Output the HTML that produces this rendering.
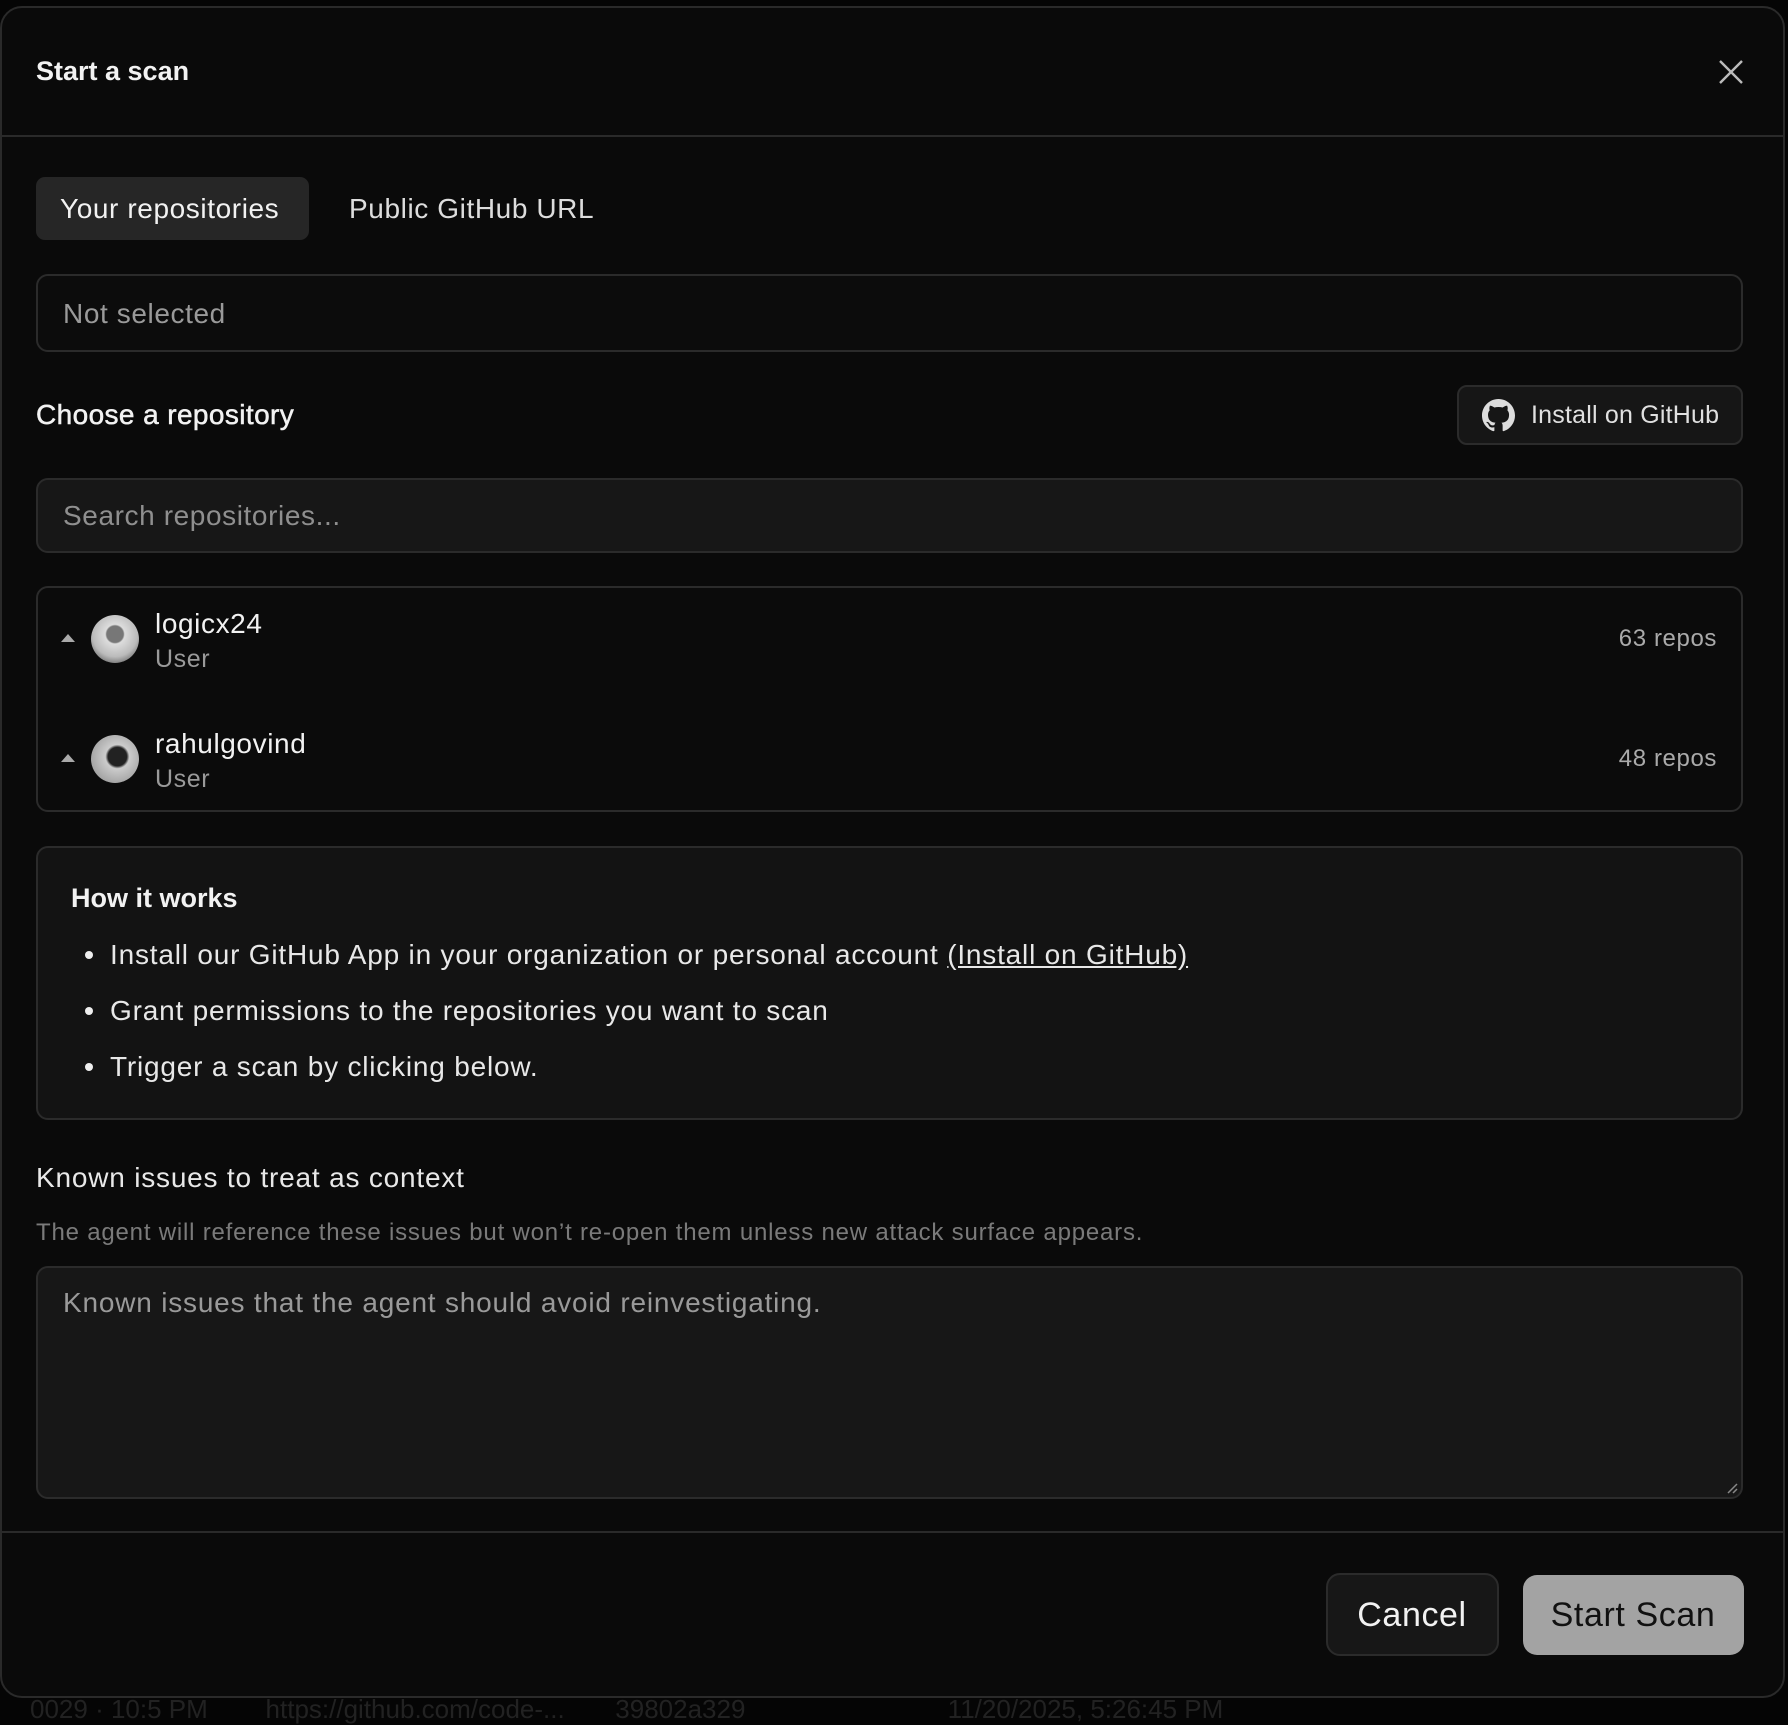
<!DOCTYPE html>
<html><head><style>
*{box-sizing:border-box;margin:0;padding:0}
body{width:1788px;height:1704px;background:#050505;font-family:"Liberation Sans",sans-serif;position:relative;overflow:hidden;color:#f2f2f2}
.abs{position:absolute}
.modal{left:0;top:6px;width:1785px;height:1692px;background:#0a0a0a;border:2px solid #2a2a2a;border-radius:22px}
.t{position:absolute;white-space:nowrap;line-height:1;letter-spacing:0.6px}
.box{position:absolute;border:2px solid #2b2b2b;border-radius:12px}
</style></head><body>
<div class="abs" style="left:30px;top:1694px;color:#222;font-size:26px;white-space:nowrap">0029 · 10:5 PM &nbsp;&nbsp;&nbsp;&nbsp;&nbsp;&nbsp; https://github.com/code-... &nbsp;&nbsp;&nbsp;&nbsp;&nbsp; 39802a329 &nbsp;&nbsp;&nbsp;&nbsp;&nbsp;&nbsp;&nbsp;&nbsp;&nbsp;&nbsp;&nbsp;&nbsp;&nbsp;&nbsp;&nbsp;&nbsp;&nbsp;&nbsp;&nbsp;&nbsp;&nbsp;&nbsp;&nbsp;&nbsp;&nbsp;&nbsp; 11/20/2025, 5:26:45 PM</div>
<div class="abs modal"></div>
<div class="t" style="left:36px;top:58px;font-size:27px;font-weight:bold;letter-spacing:0">Start a scan</div>
<svg class="abs" style="left:1718px;top:59px" width="26" height="26" viewBox="0 0 26 26"><path d="M2 2L24 24M24 2L2 24" stroke="#bbb" stroke-width="2.4"/></svg>
<div class="abs" style="left:0;top:135px;width:1785px;height:2px;background:#2a2a2a"></div>

<div class="abs" style="left:36px;top:177px;width:273px;height:63px;background:#262626;border-radius:9px"></div>
<div class="t" style="left:60px;top:195px;font-size:28px">Your repositories</div>
<div class="t" style="left:349px;top:195px;font-size:28px;color:#ddd">Public GitHub URL</div>

<div class="box" style="left:36px;top:274px;width:1707px;height:78px;background:#0c0c0c"></div>
<div class="t" style="left:63px;top:300px;font-size:28px;color:#9a9a9a">Not selected</div>

<div class="t" style="left:36px;top:401px;font-size:28px;letter-spacing:0.4px;-webkit-text-stroke:0.5px #f2f2f2">Choose a repository</div>
<div class="box" style="left:1457px;top:385px;width:286px;height:60px;background:#161616;border-radius:10px"></div>
<svg class="abs" style="left:1482px;top:399px" width="33" height="33" viewBox="0 0 16 16"><path fill="#ddd" d="M8 0C3.58 0 0 3.58 0 8c0 3.54 2.29 6.53 5.47 7.59.4.07.55-.17.55-.38 0-.19-.01-.82-.01-1.49-2.01.37-2.53-.49-2.69-.94-.09-.23-.48-.94-.82-1.13-.28-.15-.68-.52-.01-.53.63-.01 1.08.58 1.23.82.72 1.21 1.87.87 2.33.66.07-.52.28-.87.51-1.07-1.78-.2-3.64-.89-3.64-3.95 0-.87.31-1.59.82-2.15-.08-.2-.36-1.02.08-2.12 0 0 .67-.21 2.2.82.64-.18 1.32-.27 2-.27.68 0 1.36.09 2 .27 1.53-1.04 2.2-.82 2.2-.82.44 1.1.16 1.920.08 2.12.51.56.82 1.27.82 2.15 0 3.07-1.87 3.75-3.65 3.95.29.25.54.73.54 1.48 0 1.07-.01 1.93-.01 2.2 0 .21.15.46.55.38A8.013 8.013 0 0 0 16 8c0-4.42-3.58-8-8-8z"/></svg>
<div class="t" style="left:1531px;top:403px;font-size:25px;color:#e0e0e0;letter-spacing:0.2px">Install on GitHub</div>

<div class="box" style="left:36px;top:478px;width:1707px;height:75px;background:#171717"></div>
<div class="t" style="left:63px;top:502px;font-size:28px;color:#8f8f8f">Search repositories...</div>

<div class="box" style="left:36px;top:586px;width:1707px;height:226px;background:#0b0b0b"></div>
<svg class="abs" style="left:61px;top:634px" width="14" height="9"><path d="M0 8L7 0L14 8Z" fill="#aaa"/></svg>
<div class="abs" style="left:91px;top:615px;width:48px;height:48px;border-radius:50%;background:radial-gradient(circle at 50% 40%,#777 0 22%,#ddd 26%,#bbb 60%,#333 100%)"></div>
<div class="t" style="left:155px;top:610px;font-size:28px">logicx24</div>
<div class="t" style="left:155px;top:647px;font-size:25px;color:#9a9a9a">User</div>
<div class="t" style="left:1717px;top:627px;font-size:24px;color:#aaa;transform:translateX(-100%)">63 repos</div>

<svg class="abs" style="left:61px;top:754px" width="14" height="9"><path d="M0 8L7 0L14 8Z" fill="#aaa"/></svg>
<div class="abs" style="left:91px;top:735px;width:48px;height:48px;border-radius:50%;background:radial-gradient(circle at 55% 45%,#222 0 25%,#ccc 32%,#888 100%)"></div>
<div class="t" style="left:155px;top:730px;font-size:28px">rahulgovind</div>
<div class="t" style="left:155px;top:767px;font-size:25px;color:#9a9a9a">User</div>
<div class="t" style="left:1717px;top:747px;font-size:24px;color:#aaa;transform:translateX(-100%)">48 repos</div>

<div class="box" style="left:36px;top:846px;width:1707px;height:274px;background:#131313"></div>
<div class="t" style="left:71px;top:885px;font-size:27px;font-weight:bold;letter-spacing:0">How it works</div>
<div class="abs" style="left:85px;top:951px;width:8px;height:8px;border-radius:50%;background:#eee"></div>
<div class="t" style="left:110px;top:941px;font-size:28px;color:#e8e8e8;letter-spacing:0.8px">Install our GitHub App in your organization or personal account <u>(Install on GitHub)</u></div>
<div class="abs" style="left:85px;top:1007px;width:8px;height:8px;border-radius:50%;background:#eee"></div>
<div class="t" style="left:110px;top:997px;font-size:28px;color:#e8e8e8;letter-spacing:0.8px">Grant permissions to the repositories you want to scan</div>
<div class="abs" style="left:85px;top:1063px;width:8px;height:8px;border-radius:50%;background:#eee"></div>
<div class="t" style="left:110px;top:1053px;font-size:28px;color:#e8e8e8;letter-spacing:0.8px">Trigger a scan by clicking below.</div>

<div class="t" style="left:36px;top:1164px;font-size:28px;color:#e8e8e8;letter-spacing:0.8px">Known issues to treat as context</div>
<div class="t" style="left:36px;top:1221px;font-size:24px;color:#7a7a7a;letter-spacing:0.8px">The agent will reference these issues but won’t re-open them unless new attack surface appears.</div>
<div class="box" style="left:36px;top:1266px;width:1707px;height:233px;background:#171717"></div>
<div class="t" style="left:63px;top:1289px;font-size:28px;color:#9a9a9a;letter-spacing:0.8px">Known issues that the agent should avoid reinvestigating.</div>
<svg class="abs" style="left:1726px;top:1482px" width="12" height="12"><path d="M11 2L2 11M11 7L7 11" stroke="#888" stroke-width="1.5"/></svg>

<div class="abs" style="left:0;top:1531px;width:1785px;height:2px;background:#2a2a2a"></div>
<div class="box" style="left:1326px;top:1573px;width:173px;height:83px;background:#171717;border-radius:14px"></div>
<div class="t" style="left:1412px;top:1598px;font-size:34px;transform:translateX(-50%)">Cancel</div>
<div class="abs" style="left:1523px;top:1575px;width:221px;height:80px;background:#a3a3a3;border-radius:14px"></div>
<div class="t" style="left:1633px;top:1598px;font-size:34px;color:#111;transform:translateX(-50%)">Start Scan</div>
</body></html>
